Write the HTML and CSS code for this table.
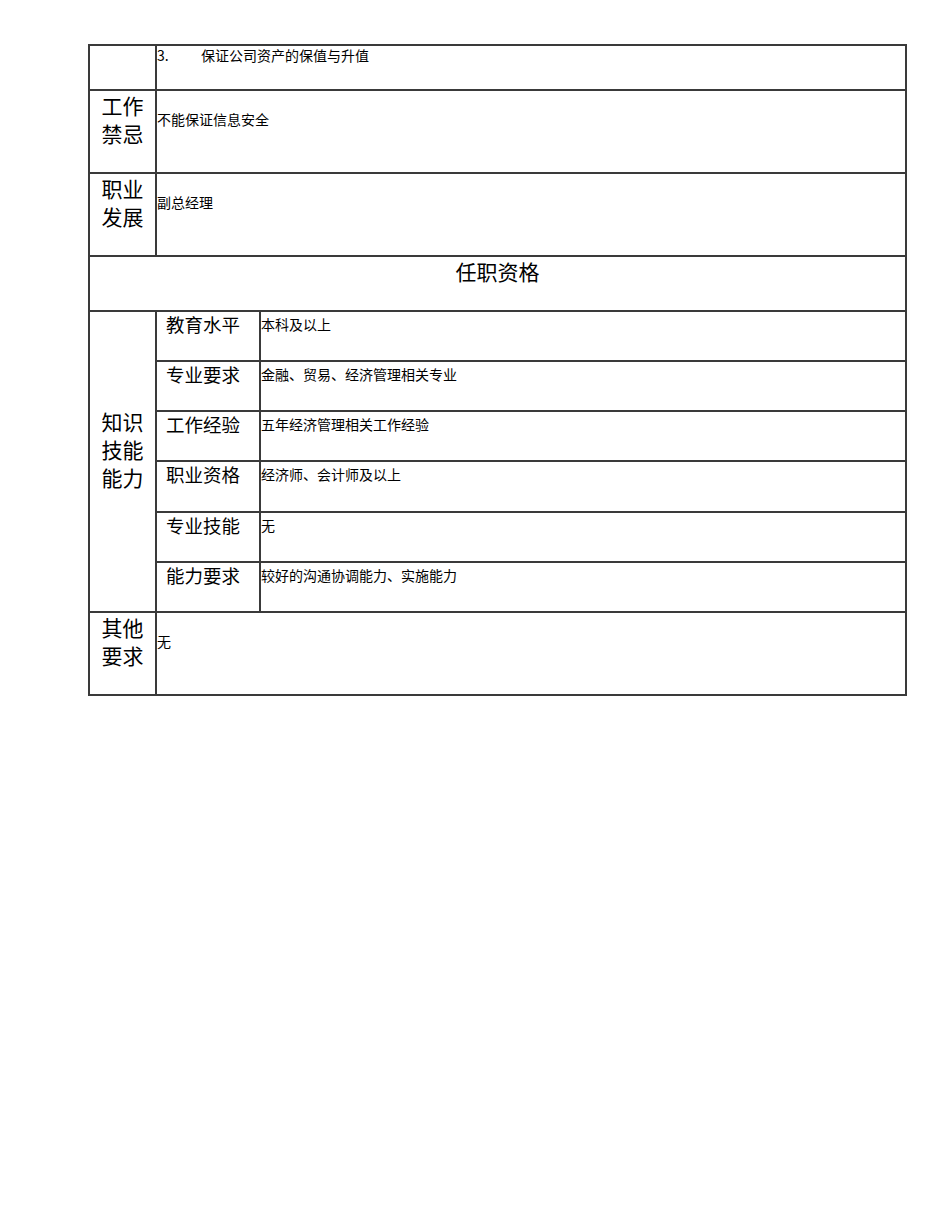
FILE: index.html
```html
<!DOCTYPE html>
<html lang="zh-CN">
<head>
<meta charset="utf-8">
<title>岗位说明书</title>
<link rel="stylesheet" href="styles.css">
</head>
<body>
<div class="page">
  <div class="sheet">
    <div class="cell label"></div>
    <div class="cell value span2 first"><span class="num">3.</span>保证公司资产的保值与升值</div>

    <div class="cell label">工作<br>禁忌</div>
    <div class="cell value span2 tall">不能保证信息安全</div>

    <div class="cell label">职业<br>发展</div>
    <div class="cell value span2 tall">副总经理</div>

    <div class="cell heading span3">任职资格</div>

    <div class="cell label group">知识<br>技能<br>能力</div>
    <div class="cell sublabel">教育水平</div>
    <div class="cell value short">本科及以上</div>
    <div class="cell sublabel">专业要求</div>
    <div class="cell value short">金融、贸易、经济管理相关专业</div>
    <div class="cell sublabel">工作经验</div>
    <div class="cell value short">五年经济管理相关工作经验</div>
    <div class="cell sublabel">职业资格</div>
    <div class="cell value short">经济师、会计师及以上</div>
    <div class="cell sublabel">专业技能</div>
    <div class="cell value short">无</div>
    <div class="cell sublabel">能力要求</div>
    <div class="cell value short">较好的沟通协调能力、实施能力</div>

    <div class="cell label">其他<br>要求</div>
    <div class="cell value span2 tall">无</div>
  </div>
</div>
</body>
</html>
```

FILE: styles.css
```css
* {
  box-sizing: border-box;
}

html, body {
  margin: 0;
  padding: 0;
  background: #ffffff;
}

body {
  font-family: "Noto Sans CJK SC", "Noto Sans", sans-serif;
  color: #000000;
}

.page {
  padding: 44px 0 0 88px;
}

.sheet {
  display: grid;
  width: 819px;
  grid-template-columns: 67px 104px 646px;
  grid-template-rows: 45px 83px 83px 55px 50px 50px 50px 51px 50px 50px 83px;
  border-top: 2px solid #3a3a3a;
  border-left: 2px solid #3a3a3a;
}

.cell {
  border-right: 2px solid #3a3a3a;
  border-bottom: 2px solid #3a3a3a;
  overflow: hidden;
}

.span2 {
  grid-column: span 2;
}

.span3 {
  grid-column: span 3;
}

.label {
  font-size: 21px;
  line-height: 28px;
  text-align: center;
  padding-top: 0;
}

.group {
  grid-row: span 6;
  display: flex;
  align-items: center;
  justify-content: center;
  padding: 0 0 26px 0;
}

.sublabel {
  font-size: 18.5px;
  line-height: 24px;
  padding: 0 0 0 9px;
}

.heading {
  font-size: 21px;
  line-height: 28px;
  text-align: center;
  padding-top: 0;
}

.value {
  font-size: 14px;
  line-height: 18px;
  padding-left: 0;
}

.first {
  padding-top: 0;
}

.tall {
  padding-top: 19px;
}

.short {
  padding-top: 3px;
}

.num {
  display: inline-block;
  width: 44px;
}
```
